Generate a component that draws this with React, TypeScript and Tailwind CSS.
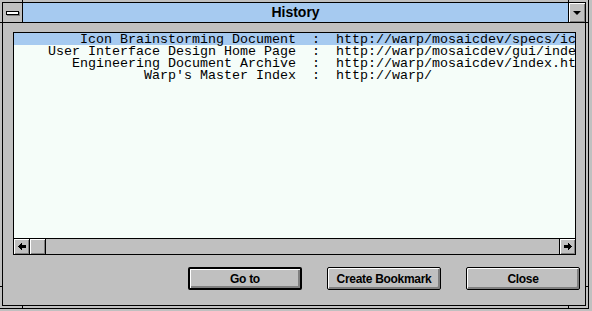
import React from "react";

const history = [
  { title: "Icon Brainstorming Document", url: "http://warp/mosaicdev/specs/icons.html" },
  { title: "User Interface Design Home Page", url: "http://warp/mosaicdev/gui/index.html" },
  { title: "Engineering Document Archive", url: "http://warp/mosaicdev/index.html" },
  { title: "Warp's Master Index", url: "http://warp/" },
];

function ArrowIcon(props: { dir: "left" | "right" }) {
  return (
    <svg width="8" height="7" viewBox="0 0 8 7" shapeRendering="crispEdges" className={props.dir === "right" ? "rotate-180" : ""}>
      <polygon points="0,3.5 4,0 4,2 8,2 8,5 4,5 4,7" fill="#000" />
    </svg>
  );
}

function ScrollButton(props: { dir: "left" | "right" }) {
  return (
    <div
      className={
        "w-[16px] h-full flex items-center justify-center bg-[#c0c0c0] shadow-[inset_1px_1px_0_#ffffff,inset_-1px_-1px_0_#808080] border-black " +
        (props.dir === "left" ? "border-r" : "border-l")
      }
    >
      <ArrowIcon dir={props.dir} />
    </div>
  );
}

function DialogButton(props: { label: string; isDefault?: boolean }) {
  return (
    <button
      className={
        "w-[114px] h-[23px] rounded-[2px] border-black bg-[#c0c0c0] text-black font-bold text-[12px] tracking-[-0.3px] shadow-[inset_1px_1px_0_#ffffff,inset_-2px_-2px_0_#808080] " +
        (props.isDefault ? "border-2" : "border")
      }
      style={{ fontFamily: '"Liberation Sans", Arial, sans-serif' }}
    >
      {props.label}
    </button>
  );
}

export default function App() {
  return (
    <div className="w-[592px] h-[311px] bg-[#c0c0c0] overflow-hidden" style={{ fontFamily: '"Liberation Sans", Arial, sans-serif' }}>
      <div className="relative -ml-px -mt-px w-[590px] h-[310px] border border-black p-[2px]">
        {/* resize frame corner ticks */}
        <div className="absolute top-[-1px] left-[22px] w-px h-[3px] bg-black" />
        <div className="absolute top-[-1px] left-[568px] w-px h-[3px] bg-black" />
        <div className="absolute bottom-[-1px] left-[22px] w-px h-[3px] bg-black" />
        <div className="absolute bottom-[-1px] left-[568px] w-px h-[3px] bg-black" />
        <div className="absolute left-[-1px] top-[22px] h-px w-[3px] bg-black" />
        <div className="absolute left-[-1px] top-[286px] h-px w-[3px] bg-black" />
        <div className="absolute right-[-1px] top-[22px] h-px w-[3px] bg-black" />
        <div className="absolute right-[-1px] top-[286px] h-px w-[3px] bg-black" />

        <div className="h-full border border-black flex flex-col">
          {/* title bar */}
          <div className="h-[20px] border-b border-black flex">
            <div className="w-[20px] border-r border-black flex items-center justify-center">
              <div className="w-[13px] h-[4px] mr-[1px] border border-black bg-white shadow-[1px_1px_0_#808080]" />
            </div>
            <div className="flex-1 bg-[#a6caf0] flex items-center justify-center text-[14px] font-bold text-black">
              History
            </div>
            <div className="w-[17px] border-l border-black bg-[#c0c0c0] shadow-[inset_1px_1px_0_#ffffff,inset_-1px_-1px_0_#808080] flex items-center justify-center">
              <div className="w-0 h-0 border-l-[4px] border-r-[4px] border-t-[4px] border-l-transparent border-r-transparent border-t-black" />
            </div>
          </div>

          {/* client area */}
          <div className="flex-1 flex flex-col pt-[9px]">
            <div className="ml-[10px] mr-[9px] h-[223px] border border-black flex flex-col">
              <div
                className="flex-1 bg-[#f5fdf9] overflow-hidden text-[13.33px] text-black whitespace-pre"
                style={{ fontFamily: '"Liberation Mono", "Courier New", monospace' }}
              >
                {history.map((h, i) => (
                  <div key={h.url} className={"h-[12px] pt-[1px] leading-[12px] flex pl-[2px] " + (i === 0 ? "bg-[#a6caf0]" : "")}>
                    <span className="w-[280px] shrink-0 text-right">{h.title}</span>
                    <span className="shrink-0">{"  :  "}</span>
                    <span className="shrink-0">{h.url}</span>
                  </div>
                ))}
              </div>
              <div className="h-[16px] border-t border-black flex bg-[#c0c0c0]">
                <ScrollButton dir="left" />
                <div className="w-[16px] h-full border-r border-black shadow-[inset_1px_1px_0_#ffffff,inset_-1px_-1px_0_#808080]" />
                <div className="flex-1" />
                <ScrollButton dir="right" />
              </div>
            </div>

            <div className="mt-[12px] flex justify-end gap-[25px] pr-[5px]">
              <DialogButton label="Go to" isDefault />
              <DialogButton label="Create Bookmark" />
              <DialogButton label="Close" />
            </div>
          </div>
        </div>
      </div>
    </div>
  );
}
